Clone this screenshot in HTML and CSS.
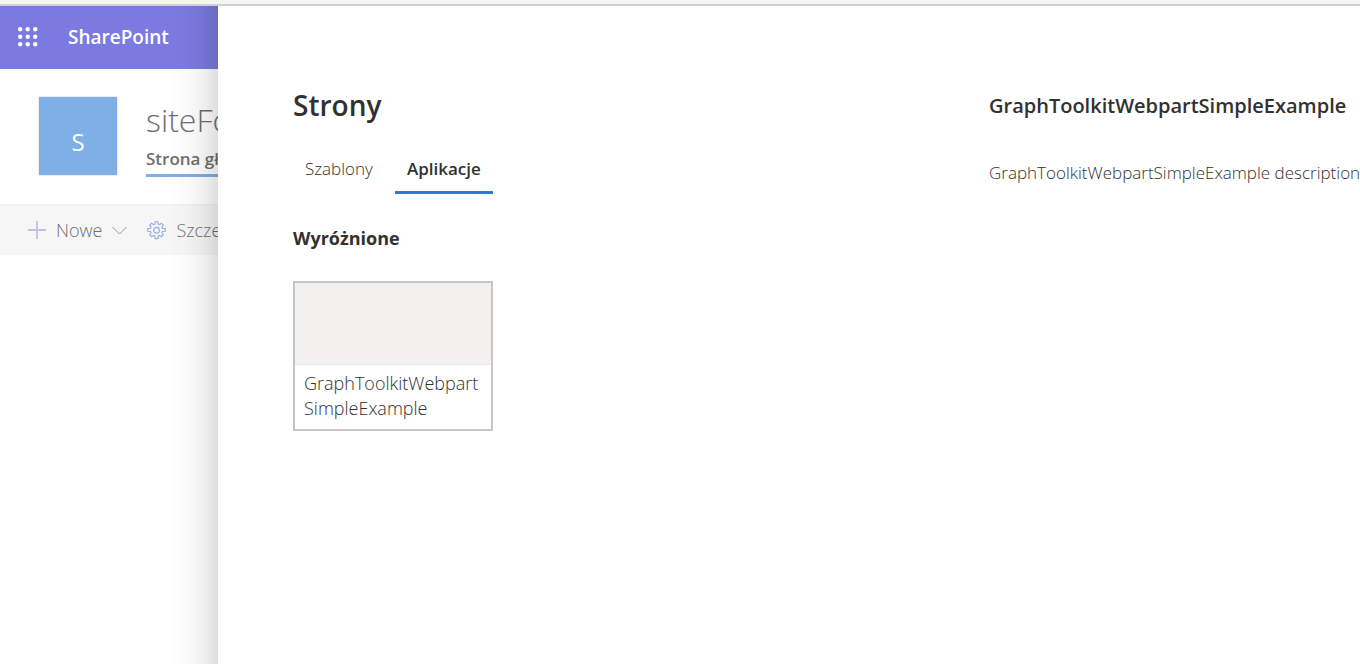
FILE: index.html
```html
<!DOCTYPE html>
<html lang="pl">
<head>
<meta charset="utf-8">
<title>Strony</title>
<link rel="stylesheet" href="styles.css">
</head>
<body>
<div class="site">
  <header class="suite-bar">
    <button class="launcher" aria-label="Aplikacje Microsoft 365">
      <svg width="20" height="20" viewBox="0 0 20 20" fill="currentColor"><circle cx="2.200" cy="2.200" r="2.200"/><circle cx="9.700" cy="2.200" r="2.200"/><circle cx="17.200" cy="2.200" r="2.200"/><circle cx="2.200" cy="9.700" r="2.200"/><circle cx="9.700" cy="9.700" r="2.200"/><circle cx="17.200" cy="9.700" r="2.200"/><circle cx="2.200" cy="17.200" r="2.200"/><circle cx="9.700" cy="17.200" r="2.200"/><circle cx="17.200" cy="17.200" r="2.200"/></svg>
    </button>
    <a class="brand" href="#">SharePoint</a>
  </header>
  <div class="site-header">
    <a class="site-logo" href="#">S</a>
    <div class="site-info">
      <a class="site-name" href="#">siteFo</a>
      <a class="site-link" href="#">Strona główna</a>
    </div>
  </div>
  <div class="command-bar">
    <button class="command">
      <svg width="18" height="18" viewBox="0 0 18 18" fill="none" stroke="#bfc0ea" stroke-width="1.800"><path d="M9 0v18M0 9h18"/></svg>
      <span>Nowe</span>
      <svg width="15" height="9" viewBox="0 0 15 9" fill="none" stroke="#999a98"><path d="M.5 1l7 7 7-7"/></svg>
    </button>
    <button class="command">
      <svg width="19" height="19" viewBox="0 0 20 20" fill="none" stroke="#91aee6" stroke-width="1.200"><path d="M8.300 3.200L8.600.8h2.800l.3 2.400 1.500.6 1.900-1.500 2 2-1.400 1.900.6 1.500 2.900.3v2.800l-2.900.3-.6 1.500 1.400 1.900-2 2-1.900-1.400-1.500.6-.3 2.900H8.600l-.3-2.900-1.500-.6-1.900 1.400-2-2 1.400-1.900-.6-1.500-2.900-.3V8l2.900-.3.600-1.500-1.400-1.900 2-2 1.900 1.500z"/><circle cx="10" cy="9.700" r="3"/></svg>
      <span>Szczegóły</span>
    </button>
  </div>
</div>
<main class="panel">
  <section class="picker">
    <h1 class="title">Strony</h1>
    <div class="tabs" role="tablist">
      <button class="tab" role="tab" aria-selected="false">Szablony</button>
      <button class="tab tab-active" role="tab" aria-selected="true">Aplikacje</button>
    </div>
    <h2 class="group-title">Wyróżnione</h2>
    <button class="card">
      <span class="card-preview"></span>
      <span class="card-name">GraphToolkitWebpart<wbr>SimpleExample</span>
    </button>
  </section>
  <aside class="details">
    <h2 class="details-title">GraphToolkitWebpartSimpleExample</h2>
    <p class="details-text">GraphToolkitWebpartSimpleExample description</p>
  </aside>
</main>
</body>
</html>
```

FILE: styles.css
```css
* { box-sizing: border-box; }
body {
  margin: 0;
  min-height: 100vh;
  position: relative;
  overflow: hidden;
  border-top: 4px solid #f5f5f5;
  background: #fff;
  color: #323130;
  font-family: "Open Sans", "Noto Sans", sans-serif;
  font-size: 17px;
  font-weight: 300;
}
button { border: 0; padding: 0; background: none; font: inherit; color: inherit; cursor: pointer; }
a { color: inherit; text-decoration: none; }
svg { display: block; flex: none; }
h1, h2, p { margin: 0; }

.site { border-top: 2px solid #d0d0d0; color: #6f6f6e; white-space: nowrap; }
.suite-bar {
  display: flex;
  align-items: center;
  gap: 30px;
  height: 63px;
  padding: 0 18px 2px;
  background: #7c7ae0;
  color: #fff;
}
.brand { font-size: 19px; font-weight: 600; }
.site-header { display: flex; gap: 28px; padding: 27px 38px; }
.site-logo {
  display: flex;
  align-items: center;
  justify-content: center;
  width: 80px;
  height: 80px;
  padding-top: 10px;
  border: 1px solid #e9eef5;
  background: #80aee7;
  color: #fff;
  font-size: 24px;
  font-weight: 400;
}
.site-info { display: flex; flex-direction: column; align-items: flex-start; padding-top: 2px; }
.site-name { font-size: 32px; line-height: 44px; }
.site-link { margin-top: 2px; border-bottom: 3px solid #80aee7; font-size: 17px; font-weight: 600; line-height: 30px; }
.command-bar {
  display: flex;
  align-items: center;
  gap: 20px;
  height: 51px;
  padding: 0 28px;
  border-top: 1px solid #f0f0f0;
  background: #f6f6f6;
}
.command { display: flex; align-items: center; gap: 10px; font-size: 18px; }

.panel {
  position: absolute;
  inset: 2px 0 0 218px;
  display: grid;
  grid-template-columns: minmax(0, 1fr) 371px;
  padding: 80px 0 0 75px;
  background: #fff;
}
.panel::before {
  content: "";
  position: absolute;
  inset: 0 100% 0 -50px;
  width: 50px;
  background: linear-gradient(to right, transparent, rgba(0, 0, 0, .02) 40%, rgba(0, 0, 0, .06) 70%, rgba(0, 0, 0, .13));
  pointer-events: none;
}
.title { font-size: 28px; font-weight: 600; line-height: 38px; }
.tabs { display: flex; gap: 10px; padding-top: 20px; }
.tab { padding: 2px 12px 0; border-bottom: 3px solid transparent; line-height: 45px; }
.tab-active { border-color: #2b78d6; font-weight: 600; }
.group-title { padding-top: 30px; font-size: 18px; font-weight: 700; line-height: 28px; }
.card {
  display: flex;
  flex-direction: column;
  width: 200px;
  margin-top: 29px;
  border: 2px solid #c6c6c6;
  text-align: left;
  font-size: 18px;
  line-height: 25px;
}
.card-preview { width: 100%; height: 82px; border-bottom: 1px solid #eae9e8; background: #f3f1f0; }
.card-name { padding: 6px 9px 8px; }
.details { overflow: hidden; white-space: nowrap; }
.details-title { font-size: 20px; font-weight: 600; line-height: 40px; }
.details-text { padding-top: 32px; line-height: 30px; }
```
